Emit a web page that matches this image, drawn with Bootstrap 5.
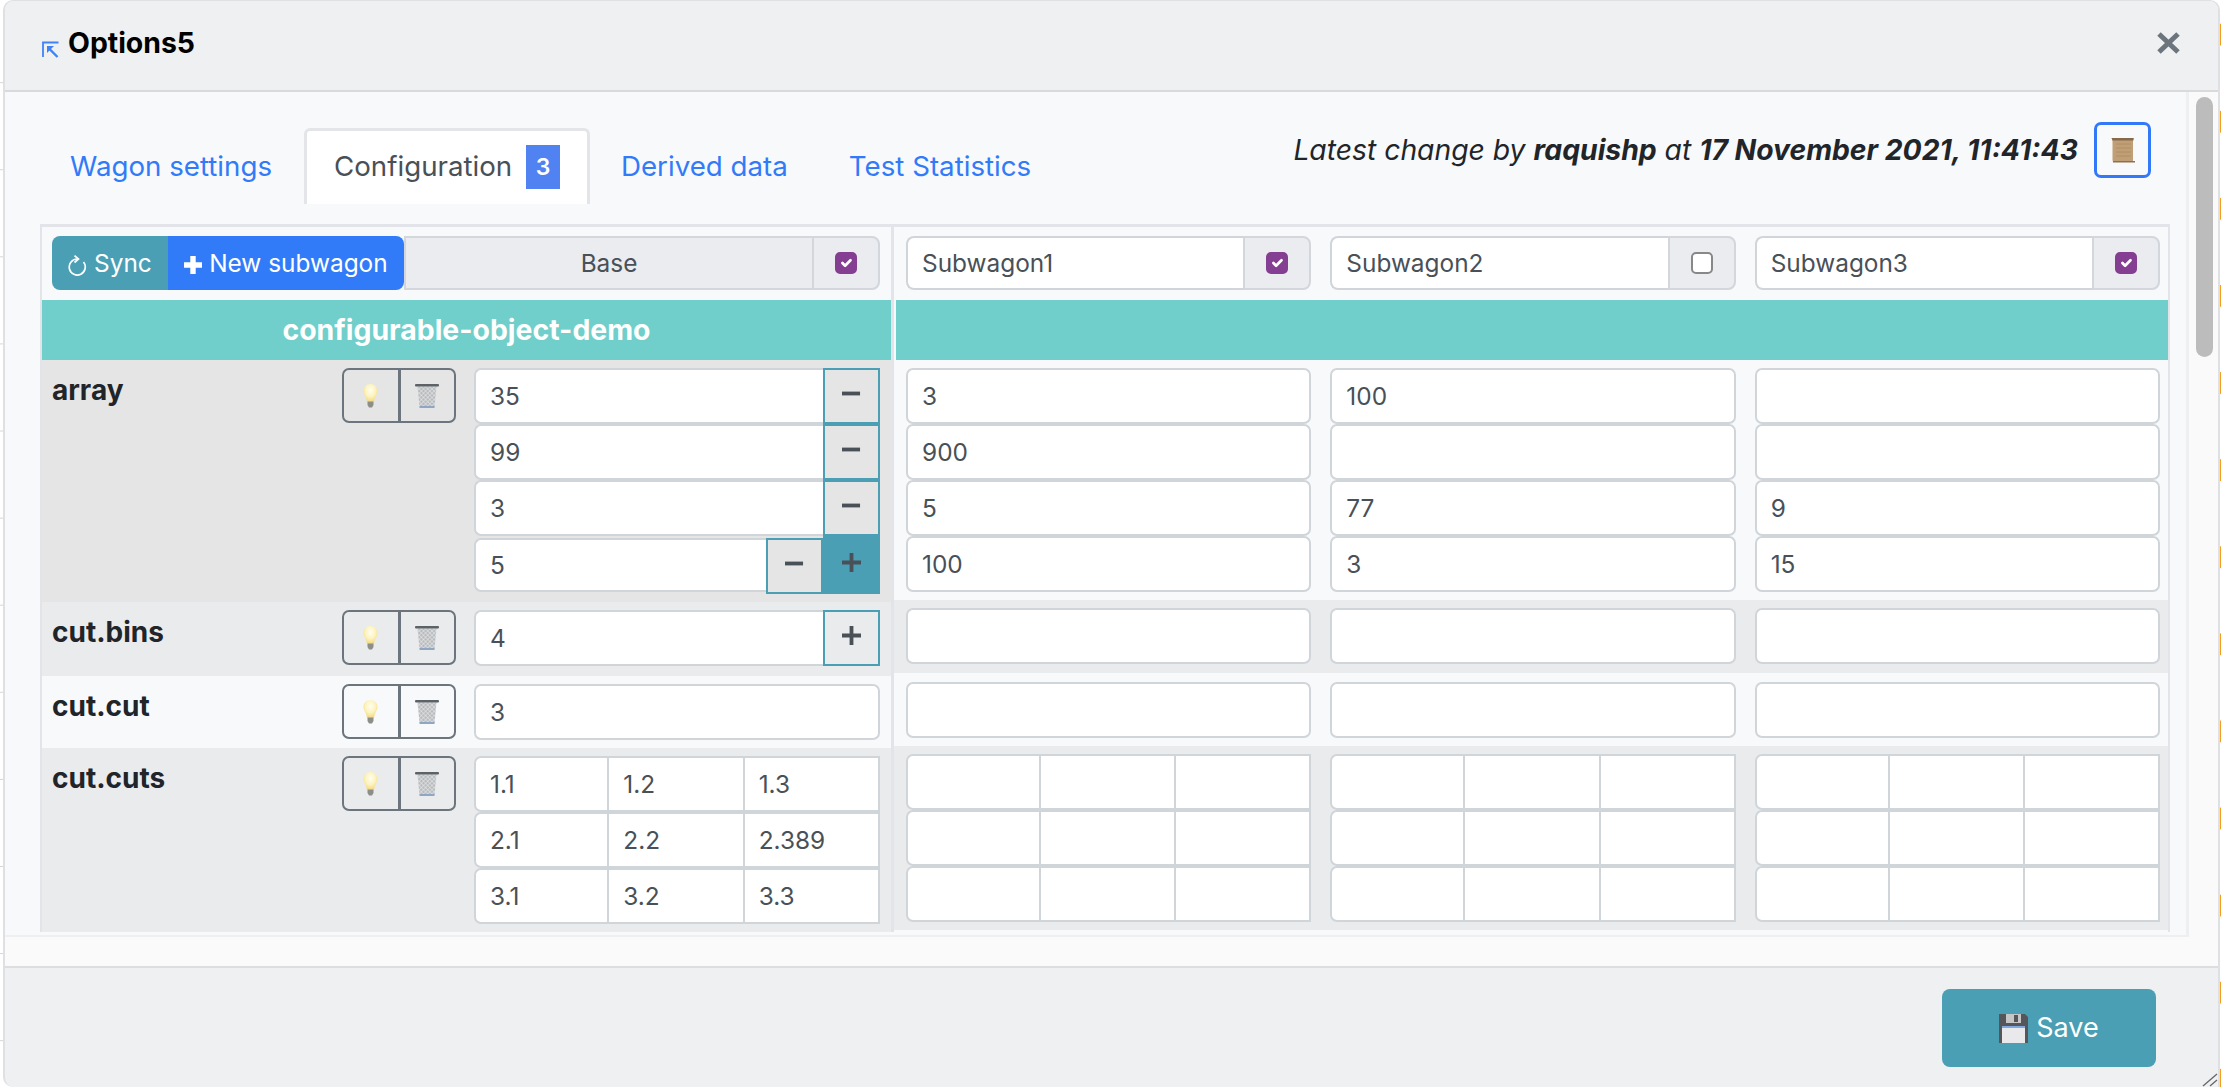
<!DOCTYPE html>
<html lang="en">
<head>
<meta charset="utf-8">
<title>Options5</title>
<link href="https://cdn.jsdelivr.net/npm/bootstrap@5.3.0/dist/css/bootstrap.min.css" rel="stylesheet">
<style>
html,body{height:100%}
body{margin:0;padding:0 1px 0 3px;overflow:hidden;font-family:Inter,"Liberation Sans",sans-serif;font-size:24.4px;line-height:36px;color:#212529;
 background:linear-gradient(180deg,transparent 24px,#f59d1c 24px,#f59d1c 46px,transparent 46px) right top/1px 87.1px repeat-y,
 linear-gradient(180deg,transparent 82px,#d5d5d5 82px,#d5d5d5 83px,transparent 83px) left top/3px 87.1px repeat-y,#fff}
.defs{display:block;width:0;height:0}
.dlg{height:100%;position:relative;background:#eff0f2;border:solid #dfe0e3;border-width:1px 2px 0 2px;border-radius:10px 10px 0 10px;overflow:hidden}
.dlg-head{height:91px;flex:none;padding:0 38px 6px 37px;border-bottom:2px solid #d9dadc;background:#eff0f2;border-radius:0}
.ttlico{margin-top:14px}
.dlg-title{font-size:28.4px;font-weight:700;line-height:36px;color:#000;margin:0}
.dlg-mid{flex:1 1 0;min-height:0;background:#fafafa;border-bottom:2px solid #dcdddf}
.pane{flex:1 1 0;min-width:0;height:845px;overflow:hidden;padding:36px 16px 0 35px;background:#f8f9fb;border-right:3px solid #eeeff1;border-bottom:2px solid #eeeff1}
.sgutter{width:29px;flex:none;padding:5px 5px 0 7px}
.sthumb{width:17px;height:260px;border-radius:9px;background:#bcbcbc}
.tophead{padding-right:19px;height:76px}
.wtabs{border-bottom:0;gap:1px}
.wtabs .nav-item:nth-child(2){margin-left:1px}
.wtabs .nav-link{padding:20px 30px;line-height:36px;height:76px;font-size:27.7px;color:#327bf8;border:0;border-radius:6px 6px 0 0}
.wtabs .nav-link.active{color:#495057;background:#fff;border:3px solid #e3e5e9;border-bottom:0;padding:17px 27px 20px}
.cnt{background:#5083f1;border-radius:0;font-size:23px;font-weight:600;padding:0;width:34px;height:44px;line-height:44px;margin-left:6px;display:inline-block;vertical-align:middle;color:#fff;text-align:center;margin-top:-3px}
.toplatest{margin-top:-6px;height:56px}
.latest{font-size:28.3px;font-style:italic;line-height:36px}
.scrollbtn{width:57px;height:56px;padding:0;border:3px solid #3279f9;border-radius:7px;background:transparent}
.wgrid{margin-top:20px;border:solid #e2e4ea;border-width:3px 2px 0 2px}
.lft{width:852px;flex:none;border-right:3px solid #e2e4ea}
.rgt{flex:1 1 0;min-width:0;margin-left:2px}
.tbar{height:73px;padding:9px 11px 0 10px}
.rtbar{height:73px;padding:9px 8px 0 12px;gap:19px;margin-left:-2px}
.tbar .btn{font-size:24.4px;height:54px;padding:0;line-height:50px;color:#fff;border:0}
.b-sync{width:116px;background:#4a9fb5;border-radius:8px 0 0 8px!important}
.b-new{width:236px;background:#327bf8;border-radius:0 8px 8px 0!important}
.base-lab{flex:1;height:54px;background:#eaecf0;border:solid #d3d6da;border-width:2px 0 2px 2px;color:#495057;text-align:center;line-height:50px;padding:0}
.tick{width:68px;height:54px;flex:none;background:#eaecf0;border:2px solid #d3d6da;border-radius:0 8px 8px 0;display:flex;align-items:center;justify-content:center}
.tick .form-check-input{width:22px;height:22px;margin:0;border:2px solid #888;border-radius:5px;background-color:#fff;float:none}
.tick .form-check-input:checked{background-color:#843e92;border-color:#843e92;background-size:100%}
.nameg{flex:1 1 0;min-width:0}
.form-control.cellin{height:56px;padding:0 14px;font-size:24.4px;line-height:36px;color:#495057;border:2px solid #d0d5d9;border-radius:7px;background:#fff;box-shadow:none}
.nameg .form-control.cellin{height:54px;border-radius:8px 0 0 8px;border-right:0}
.band{height:60px;background:#70cfca;color:#fff;font-size:28.4px;font-weight:700;line-height:60px;text-align:center}
.rowa{background:#e5e5e5}.rowb{background:#eaebed}.rowc{background:#f8f9fb}
.lrow{padding:8px 11px 8px 10px}
.lrow.binsrow{padding-bottom:10px}
.lname{width:290px;flex:none;font-size:28px;font-weight:700;line-height:36px;padding-top:4px}
.tools{width:114px;flex:none;height:55px;margin-right:18px}
.tools .btn{height:55px;width:58px;padding:0;border:2px solid #6c757d;border-radius:7px;background:transparent;display:flex;align-items:center;justify-content:center}
.tools .btn+.btn{margin-left:-2px}
.tools .btn:first-child{border-radius:7px 0 0 7px}
.tools .btn:last-child{border-radius:0 7px 7px 0}
.vals{flex:1 1 0;min-width:0}
.vals .cellin{flex:1 1 0;min-width:0}
.form-control.cellin.hasb{border-right:0;border-radius:7px 0 0 7px}
.form-control.cellin.lastv{height:54px;align-self:center}
.addb{width:57px;flex:none;height:56px;padding:0;border:2px solid #4a9fb5;border-radius:0;background:transparent;color:#495057;display:flex;align-items:center;justify-content:center}
.addb svg{margin-bottom:5px}
.addb.two{margin-top:2px}
.addb.fill{background:#4a9fb5;height:58px}
.rrow{padding:8px 8px 8px 12px;gap:19px;margin-left:-2px}
.rrow.rbins{padding-bottom:9px}
.rrow.rcut{padding-top:9px}
.rcol{flex:1 1 0;min-width:0}
.trio{display:grid;grid-template-columns:repeat(3,1fr)}
.trio .form-control.cellin{border-radius:0;margin-left:-2px;width:calc(100% + 2px)}
.trio .form-control.cellin:nth-child(3n+1){margin-left:0;width:100%;border-radius:7px 0 0 7px}
.grip{position:absolute;right:0;bottom:0}
.dlg-foot{height:119px;flex:none;padding:21px 62px 0 0}
.b-save{width:214px;height:78px;padding:0;border:0;border-radius:8px;background:#4a9fb5;color:#fff;font-size:27px;display:flex;align-items:center;justify-content:center;gap:8px}
</style>
</head>
<body>
<svg class="defs" aria-hidden="true"><defs>
<radialGradient id="glow" cx="50%" cy="35%" r="60%"><stop offset="0" stop-color="#fffef0"/><stop offset=".6" stop-color="#fdf3bf"/><stop offset="1" stop-color="#f5dc85"/></radialGradient>
<pattern id="mesh" width="3" height="3" patternUnits="userSpaceOnUse" patternTransform="rotate(45)"><rect width="3" height="3" fill="#b8bbbe"/><path d="M0 0h3M0 0v3" stroke="#eceeee" stroke-width="1"/></pattern>
<symbol id="ibulb" viewBox="0 0 15 24"><path d="M7.5 0C3.4 0 .5 3 .5 7c0 3.6 3 6 3.5 11h7c.5-5 3.5-7.400 3.500-11 0-4-2.900-7-7-7Z" fill="url(#glow)"/><path d="M4.500 17.500h6v3.500l-1.500 2.500h-3l-1.500-2.500Z" fill="#8e8e88"/></symbol>
<symbol id="itrash" viewBox="0 0 24 24"><path d="M2.500 2.500h19L19.500 23h-15Z" fill="url(#mesh)"/><rect y="0" width="24" height="2.500" rx="1" fill="#5d6266"/><rect x="4.500" y="22" width="15" height="2" fill="#8fa6c4"/></symbol>
<symbol id="iminus" viewBox="0 0 20 20"><rect x="0" y="8" width="19" height="4" fill="#495057"/></symbol>
<symbol id="iplus" viewBox="0 0 20 20"><path d="M8 0h4v8h8v4h-8v8H8v-8H0V8h8Z" fill="#495057"/></symbol>
</defs></svg>
<div class="dlg d-flex flex-column">
  <div class="modal-header dlg-head d-flex align-items-center justify-content-between">
    <div class="d-flex align-items-center gap-2">
      <svg width="18" height="18" viewBox="0 0 18 18" class="ttlico" aria-hidden="true"><path d="M1 16V1.500h15.500" fill="none" stroke="#3e83f8" stroke-width="1.800"/><path d="M15.500 16 7 7.500" stroke="#3e83f8" stroke-width="2.400"/><path d="M5 5h7l-7 7Z" fill="#3e83f8"/></svg>
      <h5 class="dlg-title">Options5</h5>
    </div>
    <button type="button" class="btn p-0 border-0 d-flex" aria-label="Close"><svg width="23" height="22" viewBox="0 0 23 22" aria-hidden="true"><path d="M2 2l19 18M21 2 2 20" stroke="#6c757d" stroke-width="5"/></svg></button>
  </div>
  <div class="dlg-mid d-flex">
    <div class="pane">
      <div class="tophead d-flex justify-content-between">
        <ul class="nav nav-tabs wtabs">
          <li class="nav-item"><a class="nav-link" href="#">Wagon settings</a></li>
          <li class="nav-item"><a class="nav-link active" href="#">Configuration <span class="cnt">3</span></a></li>
          <li class="nav-item"><a class="nav-link" href="#">Derived data</a></li>
          <li class="nav-item"><a class="nav-link" href="#">Test Statistics</a></li>
        </ul>
        <div class="d-flex align-items-center gap-3 toplatest">
          <div class="latest">Latest change by <b>raquishp</b> at <b>17 November 2021, 11:41:43</b></div>
          <button type="button" class="btn scrollbtn d-flex align-items-center justify-content-center" aria-label="History">
            <svg width="26" height="26" viewBox="0 0 26 26" aria-hidden="true"><path d="M2 1h22l-1 2v21l2 1H3l-.5-2V3Z" fill="#c19f76"/><path d="M1.500 1h22v2.500h-21Z" fill="#86684a"/><path d="M3 24h22v1.500H3Z" fill="#8d7052"/><path d="M6 7h15M6 11h15M6 15h15M6 19h15" stroke="#b08d62" stroke-width="1"/></svg>
          </button>
        </div>
      </div>
      <div class="wgrid d-flex">
        <div class="lft">
          <div class="tbar d-flex">
            <button type="button" class="btn b-sync"><svg width="19" height="21" viewBox="0 0 19 21" aria-hidden="true"><path d="M9 4A8 8 0 1 0 15.500 7" fill="none" stroke="#fff" stroke-width="1.700"/><path d="M6.500.700 10.500 4 6.500 7.500" fill="none" stroke="#fff" stroke-width="1.700"/></svg> Sync</button>
            <button type="button" class="btn b-new"><svg width="18" height="18" viewBox="0 0 20 20" aria-hidden="true"><path d="M7 0h6v7h7v6h-7v7H7v-7H0V7h7Z" fill="#fff"/></svg> New subwagon</button>
            <div class="base-lab">Base</div>
            <div class="tick"><input class="form-check-input" type="checkbox" checked aria-label="Base"></div>
          </div>
          <div class="band">configurable-object-demo</div>

          <div class="lrow rowa d-flex">
            <div class="lname">array</div>
            <div class="tools btn-group"><button type="button" class="btn" aria-label="Hint"><svg width="15" height="24"><use href="#ibulb"/></svg></button><button type="button" class="btn" aria-label="Delete"><svg width="24" height="24"><use href="#itrash"/></svg></button></div>
            <div class="vals">
              <div class="d-flex"><input class="form-control cellin hasb" value="35"><button type="button" class="addb" aria-label="Remove"><svg width="19" height="19"><use href="#iminus"/></svg></button></div>
              <div class="d-flex"><input class="form-control cellin hasb" value="99"><button type="button" class="addb" aria-label="Remove"><svg width="19" height="19"><use href="#iminus"/></svg></button></div>
              <div class="d-flex"><input class="form-control cellin hasb" value="3"><button type="button" class="addb" aria-label="Remove"><svg width="19" height="19"><use href="#iminus"/></svg></button></div>
              <div class="d-flex"><input class="form-control cellin hasb lastv" value="5"><button type="button" class="addb two" aria-label="Remove"><svg width="19" height="19"><use href="#iminus"/></svg></button><button type="button" class="addb fill" aria-label="Add"><svg width="19" height="19"><use href="#iplus"/></svg></button></div>
            </div>
          </div>

          <div class="lrow rowb d-flex binsrow">
            <div class="lname">cut.bins</div>
            <div class="tools btn-group"><button type="button" class="btn" aria-label="Hint"><svg width="15" height="24"><use href="#ibulb"/></svg></button><button type="button" class="btn" aria-label="Delete"><svg width="24" height="24"><use href="#itrash"/></svg></button></div>
            <div class="vals d-flex"><input class="form-control cellin hasb" value="4"><button type="button" class="addb" aria-label="Add"><svg width="19" height="19"><use href="#iplus"/></svg></button></div>
          </div>

          <div class="lrow rowc d-flex">
            <div class="lname">cut.cut</div>
            <div class="tools btn-group"><button type="button" class="btn" aria-label="Hint"><svg width="15" height="24"><use href="#ibulb"/></svg></button><button type="button" class="btn" aria-label="Delete"><svg width="24" height="24"><use href="#itrash"/></svg></button></div>
            <div class="vals"><input class="form-control cellin" value="3"></div>
          </div>

          <div class="lrow rowb d-flex">
            <div class="lname">cut.cuts</div>
            <div class="tools btn-group"><button type="button" class="btn" aria-label="Hint"><svg width="15" height="24"><use href="#ibulb"/></svg></button><button type="button" class="btn" aria-label="Delete"><svg width="24" height="24"><use href="#itrash"/></svg></button></div>
            <div class="vals trio">
              <input class="form-control cellin" value="1.1"><input class="form-control cellin" value="1.2"><input class="form-control cellin" value="1.3">
              <input class="form-control cellin" value="2.1"><input class="form-control cellin" value="2.2"><input class="form-control cellin" value="2.389">
              <input class="form-control cellin" value="3.1"><input class="form-control cellin" value="3.2"><input class="form-control cellin" value="3.3">
            </div>
          </div>
        </div>

        <div class="rgt">
          <div class="rtbar d-flex">
            <div class="nameg d-flex"><input class="form-control cellin" value="Subwagon1"><div class="tick"><input class="form-check-input" type="checkbox" checked aria-label="Subwagon1"></div></div>
            <div class="nameg d-flex"><input class="form-control cellin" value="Subwagon2"><div class="tick"><input class="form-check-input" type="checkbox" aria-label="Subwagon2"></div></div>
            <div class="nameg d-flex"><input class="form-control cellin" value="Subwagon3"><div class="tick"><input class="form-check-input" type="checkbox" checked aria-label="Subwagon3"></div></div>
          </div>
          <div class="band"></div>
          <div class="rrow rowc d-flex">
            <div class="rcol"><input class="form-control cellin" value="3"><input class="form-control cellin" value="900"><input class="form-control cellin" value="5"><input class="form-control cellin" value="100"></div>
            <div class="rcol"><input class="form-control cellin" value="100"><input class="form-control cellin"><input class="form-control cellin" value="77"><input class="form-control cellin" value="3"></div>
            <div class="rcol"><input class="form-control cellin"><input class="form-control cellin"><input class="form-control cellin" value="9"><input class="form-control cellin" value="15"></div>
          </div>
          <div class="rrow rbins rowb d-flex">
            <div class="rcol"><input class="form-control cellin"></div><div class="rcol"><input class="form-control cellin"></div><div class="rcol"><input class="form-control cellin"></div>
          </div>
          <div class="rrow rcut rowc d-flex">
            <div class="rcol"><input class="form-control cellin"></div><div class="rcol"><input class="form-control cellin"></div><div class="rcol"><input class="form-control cellin"></div>
          </div>
          <div class="rrow rowb d-flex">
            <div class="rcol trio"><input class="form-control cellin"><input class="form-control cellin"><input class="form-control cellin"><input class="form-control cellin"><input class="form-control cellin"><input class="form-control cellin"><input class="form-control cellin"><input class="form-control cellin"><input class="form-control cellin"></div>
            <div class="rcol trio"><input class="form-control cellin"><input class="form-control cellin"><input class="form-control cellin"><input class="form-control cellin"><input class="form-control cellin"><input class="form-control cellin"><input class="form-control cellin"><input class="form-control cellin"><input class="form-control cellin"></div>
            <div class="rcol trio"><input class="form-control cellin"><input class="form-control cellin"><input class="form-control cellin"><input class="form-control cellin"><input class="form-control cellin"><input class="form-control cellin"><input class="form-control cellin"><input class="form-control cellin"><input class="form-control cellin"></div>
          </div>
        </div>
      </div>
    </div>
    <div class="sgutter"><div class="sthumb"></div></div>
  </div>
  <div class="dlg-foot d-flex justify-content-end">
    <button type="button" class="btn b-save"><svg width="29" height="29" viewBox="0 0 29 29" aria-hidden="true"><path d="M0 0h26l3 3v26H0Z" fill="#55565a"/><rect x="7" y="0" width="15" height="9" fill="#c6c6c6"/><rect x="15" y="1" width="4" height="7" fill="#55565a"/><rect x="3" y="12" width="23" height="17" fill="#e9e9ec"/><rect x="3" y="12" width="23" height="2" fill="#7fa9e0"/></svg>Save</button>
  </div>
  <svg class="grip" width="16" height="16" viewBox="0 0 16 16" aria-hidden="true"><path d="M1 15 15 3M8 15l7-6" stroke="#666" stroke-width="1.300"/></svg>
</div>
<script src="https://cdn.jsdelivr.net/npm/bootstrap@5.3.0/dist/js/bootstrap.bundle.min.js"></script>
</body>
</html>
